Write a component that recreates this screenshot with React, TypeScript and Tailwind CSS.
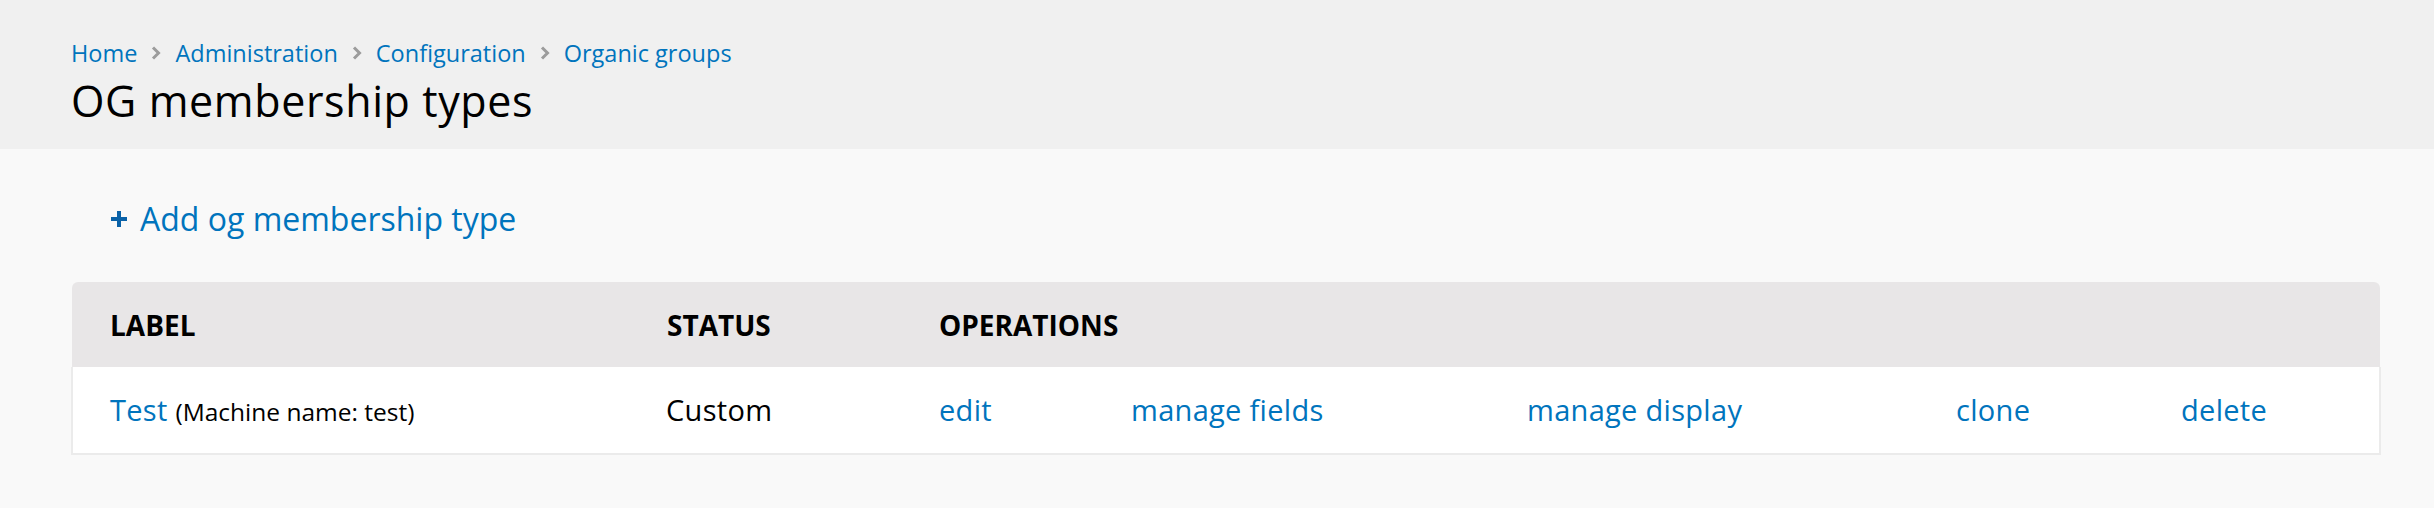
import React from "react";

const crumbs = ["Home", "Administration", "Configuration", "Organic groups"];
const operations = ["edit", "manage fields", "manage display", "clone", "delete"];

function Chevron() {
    return (
        <svg width="10" height="14" viewBox="0 0 10 14" className="mx-[14px] shrink-0">
            <path d="M2 1.5 L7.5 7 L2 12.5" fill="none" stroke="#9c9c9c" strokeWidth="3" />
        </svg>
    );
}

function PlusIcon() {
    return (
        <svg width="16" height="16" viewBox="0 0 16 16" className="shrink-0">
            <path d="M6 0h4v6h6v4h-6v6H6v-6H0V6h6z" fill="#0a62a8" />
        </svg>
    );
}

export default function App() {
    return (
        <div className="min-h-screen bg-[#f9f9f9] font-['Open_Sans',sans-serif] text-black">
            <header className="bg-[#f0f0f0] pl-[71px] pt-[36px] pb-[22px]">
                <nav className="flex items-center text-[23.5px] leading-[34px]">
                    {crumbs.map((crumb, index) => (
                        <React.Fragment key={crumb}>
                            {index > 0 && <Chevron />}
                            <a href="#" className="text-[#0074bd]">
                                {crumb}
                            </a>
                        </React.Fragment>
                    ))}
                </nav>
                <h1 className="mt-[5px] text-[43px] leading-[52px] font-normal tracking-[0.6px]">OG membership types</h1>
            </header>

            <main className="pl-[71px] pr-[53px]">
                <div className="pt-[48px] pl-[40px]">
                    <a href="#" className="inline-flex items-center gap-[13px] text-[32px] leading-[44px] text-[#0074bd]">
                        <PlusIcon />
                        Add og membership type
                    </a>
                </div>

                <table className="mt-[41px] w-full table-fixed border-collapse text-[28px]">
                    <colgroup>
                        <col className="w-[556px]" />
                        <col className="w-[272px]" />
                        <col className="w-[192px]" />
                        <col className="w-[396px]" />
                        <col className="w-[429px]" />
                        <col className="w-[225px]" />
                        <col />
                    </colgroup>
                    <thead>
                        <tr className="h-[85px] bg-[#e8e6e7] text-left font-bold uppercase">
                            <th className="rounded-tl-[6px] pl-[38px]">Label</th>
                            <th className="pl-[39px]">Status</th>
                            <th colSpan={5} className="rounded-tr-[6px] pl-[39px]">Operations</th>
                        </tr>
                    </thead>
                    <tbody>
                        <tr className="h-[87px] border-x-2 border-b-2 border-[#ebebeb] bg-white text-[29px] tracking-[0.3px]">
                            <td className="pl-[37px]">
                                <a href="#" className="text-[#0074bd]">Test</a>{" "}
                                <span className="text-[24.5px] tracking-normal">(Machine name: test)</span>
                            </td>
                            <td className="pl-[38px]">Custom</td>
                            {operations.map((op) => (
                                <td key={op} className="pl-[39px]">
                                    <a href="#" className="text-[#0074bd]">{op}</a>
                                </td>
                            ))}
                        </tr>
                    </tbody>
                </table>
            </main>
        </div>
    );
}
